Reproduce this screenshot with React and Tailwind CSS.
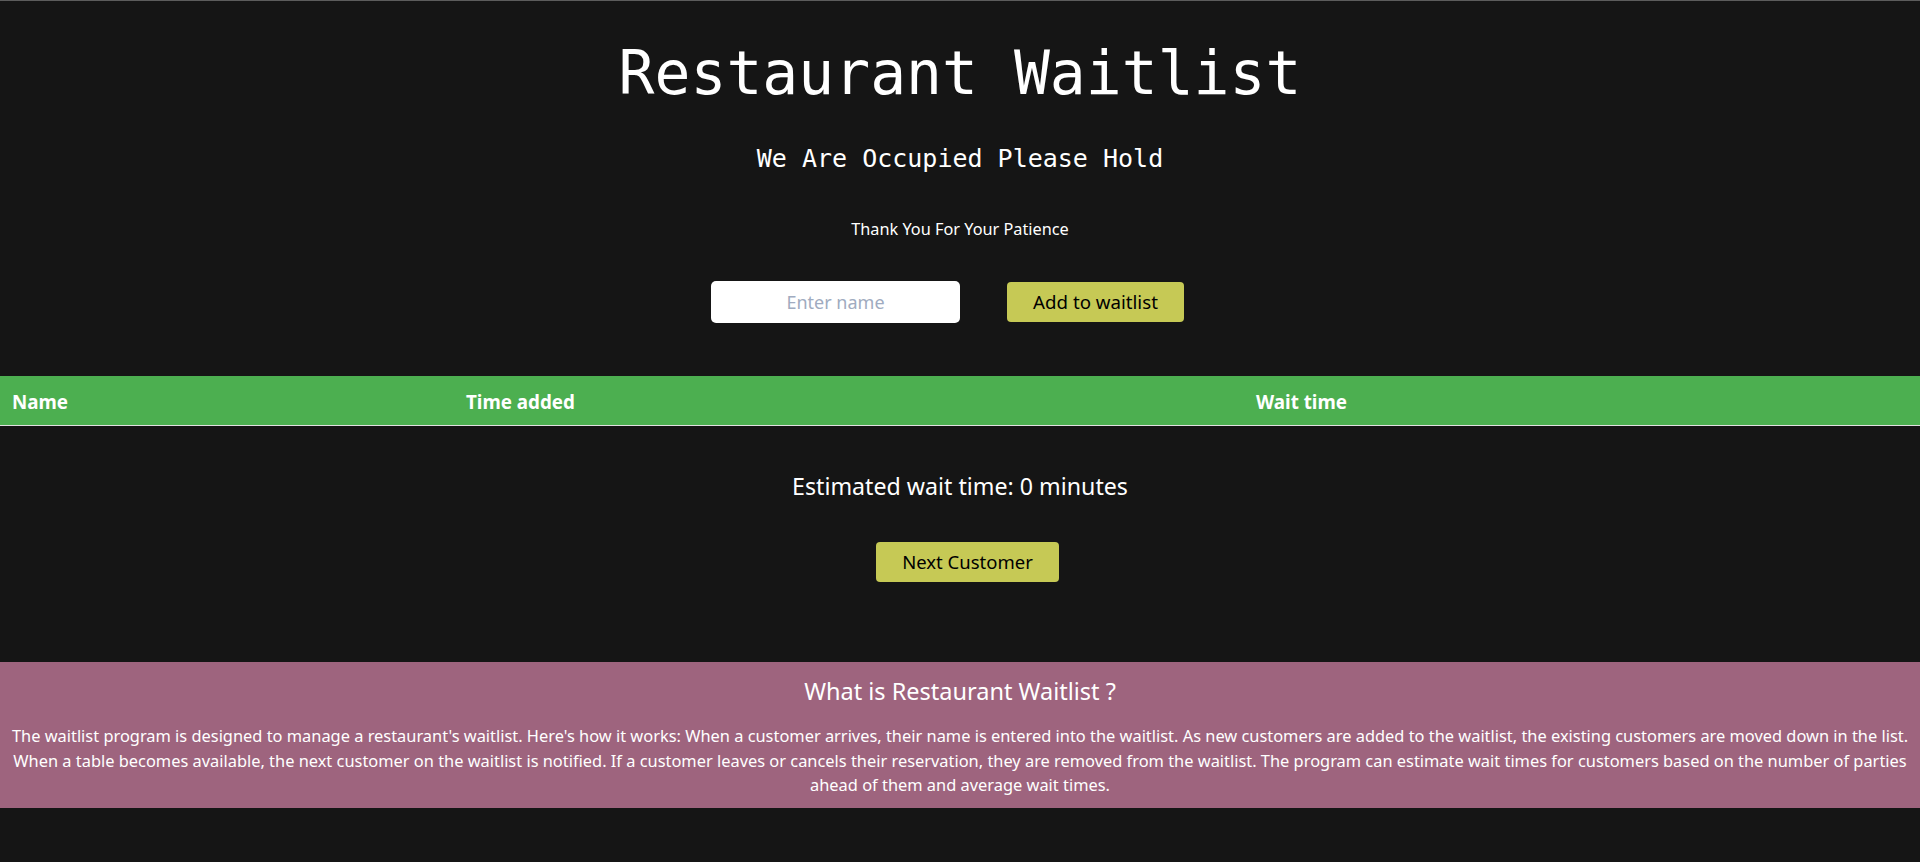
export default function App() {
  const sans = "font-['Noto_Sans',sans-serif]";
  const mono = "font-['DejaVu_Sans_Mono',monospace]";
  return (
    <div className={`min-h-[862px] w-full bg-[#151515] border-t border-[#5c5c5c] text-white ${sans}`}>
      <div className="flex flex-col items-center">
        <h1 className={`${mono} mt-[43px] text-[59.7px] leading-[60px] font-normal`}>Restaurant Waitlist</h1>
        <p className={`${mono} mt-[40px] text-[25px] leading-[30px]`}>We Are Occupied Please Hold</p>
        <p className="mt-[43px] text-[16.3px] leading-[24px]">Thank You For Your Patience</p>
        <div className="mt-[40px] flex items-center gap-[47px] mr-[25px]">
          <input
            type="text"
            placeholder="Enter name"
            className="h-[42px] w-[249px] rounded-[5px] bg-white text-center text-[18px] text-black placeholder:text-[#a0abc0] outline-none"
          />
          <button className="h-[40px] w-[177px] rounded-[4px] bg-[#c6c955] text-[18.7px] text-black">
            Add to waitlist
          </button>
        </div>
      </div>

      <div className="mt-[53px] grid h-[50px] grid-cols-[454px_790px_1fr] items-center border-b border-[#e0e0e0] bg-[#4caf50] pt-[4px] text-[18.8px] font-bold">
        <div className="pl-[12px]">Name</div>
        <div className="pl-[12px]">Time added</div>
        <div className="pl-[12px]">Wait time</div>
      </div>

      <div className="flex flex-col items-center">
        <p className="mt-[44px] text-[23.2px] leading-[32px]">Estimated wait time: 0 minutes</p>
        <button className="mt-[40px] ml-[15px] h-[40px] w-[183px] rounded-[4px] bg-[#c6c955] text-[18.5px] text-black">
          Next Customer
        </button>
      </div>

      <section className="mt-[80px] bg-[#9e647e] px-[10px] pt-[13px] pb-[10px] text-center">
        <h2 className="text-[23.5px] leading-[32px] font-normal">What is Restaurant Waitlist ?</h2>
        <p className="mt-[17px] text-[16.4px] leading-[24.5px]">
          The waitlist program is designed to manage a restaurant's waitlist. Here's how it works: When a customer arrives, their name is entered into the waitlist. As new customers are added to the waitlist, the existing customers are moved down in the list. When a table becomes available, the next customer on the waitlist is notified. If a customer leaves or cancels their reservation, they are removed from the waitlist. The program can estimate wait times for customers based on the number of parties ahead of them and average wait times.
        </p>
      </section>
    </div>
  );
}
